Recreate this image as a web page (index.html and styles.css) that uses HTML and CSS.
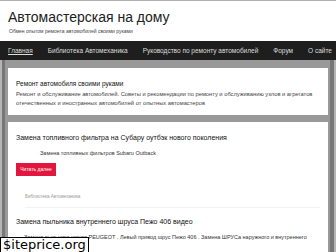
FILE: index.html
```html
<!DOCTYPE html>
<html lang="ru">
<head>
    <meta charset="UTF-8">
    <meta name="viewport" content="width=device-width, initial-scale=1.0">
    <title>Автомастерская на дому</title>
    <link rel="stylesheet" href="styles.css">
</head>
<body>
    <div class="header">
        <h1 class="site_title">Автомастерская на дому</h1>
        <p class="site_desc">Обмен опытом ремонта автомобилей своими руками</p>
    </div>
    <div class="nav">
        <a class="current" href="#">Главная</a>
        <a href="#">Библиотека Автомеханика</a>
        <a href="#">Руководство по ремонту автомобилей</a>
        <a href="#">Форум</a>
        <a href="#">О сайте</a>
    </div>
    <div class="page">
        <div class="card intro">
            <div class="intro_title">Ремонт автомобиля своими руками</div>
            <p class="intro_text">Ремонт и обслуживание автомобилей. Советы и рекомендации по ремонту и обслуживанию узлов и агрегатов отечественных и иностранных автомобилей от опытных автомастеров</p>
        </div>
        <div class="card posts">
            <div class="post">
                <h2 class="post_title">Замена топливного фильтра на Субару оутбэк нового поколения</h2>
                <p class="post_excerpt">Замена топливных фильтров Subaru Outback</p>
                <a class="more_btn" href="#">Читать далее</a>
                <div class="post_cat">Библиотека Автомеханика</div>
            </div>
            <div class="post">
                <h2 class="post_title">Замена пыльника внутреннего шруса Пежо 406 видео</h2>
                <p class="post_excerpt">Замена пыльника шруса PEUGEOT . Левый привод шрус Пежо 406 . Замена ШРУСа наружного и внутреннего</p>
            </div>
        </div>
    </div>
    <div class="badge">$iteprice.org</div>
</body>
</html>
```
FILE: styles.css
```css
body{
    margin: 0;
    font-family: 'Liberation Sans', Arial, sans-serif;
    background: #999;
    height: 252px;
    overflow: hidden;
}

.header{
    background: #fff;
    border-top: 1px solid #b0b0b0;
    height: 40px;
    padding-left: 8px;
}

.site_title{
    margin: 0;
    padding-top: 8px;
    font-size: 14px;
    font-weight: normal;
    color: #222;
    line-height: 16px;
}

.site_desc{
    margin: 3px 0 0 1px;
    font-size: 5px;
    color: #444;
}

.nav{
    background: #1e1e1e;
    height: 19px;
    display: flex;
    align-items: center;
    gap: 15px;
    padding-left: 8px;
}

.nav a{
    color: #ddd;
    font-size: 6.5px;
    text-decoration: none;
}

.nav a.current{
    text-decoration: underline;
}

.page{
    padding: 8px 8px 0 8px;
    display: flex;
    flex-direction: column;
    gap: 7px;
    box-shadow: inset 2px 0 #b5b5b5, inset 5px 0 #777, inset -2px 0 #b5b5b5, inset -6px 0 #777;
    height: 200px;
}

.card{
    background: #fff;
}

.intro{
    height: 47px;
    box-sizing: border-box;
    padding: 12px 8px 0 8px;
}

.intro_title{
    font-size: 6.5px;
    color: #111;
}

.intro_text{
    margin: 3px 0 0 0;
    font-size: 5.75px;
    line-height: 9px;
    color: #444;
}

.posts{
    flex: 1;
    padding: 12px 8px 0 8px;
}

.post_title{
    margin: 0;
    font-size: 7px;
    font-weight: normal;
    color: #111;
}

.post_excerpt{
    margin: 9px 0 0 24px;
    font-size: 5.5px;
    color: #333;
    white-space: nowrap;
}

.more_btn{
    display: inline-block;
    margin-top: 7px;
    background: #e3173e;
    color: #fff;
    font-size: 5px;
    text-decoration: none;
    width: 40px;
    height: 13px;
    line-height: 13px;
    text-align: center;
}

.post_cat{
    margin: 18px 0 0 9px;
    font-size: 4.5px;
    color: #999;
    padding-bottom: 8px;
    border-bottom: 1px solid #f2f2f2;
}

.post + .post{
    margin-top: 10px;
}

.post + .post .post_excerpt{
    margin: 9px 0 0 8px;
}

.badge{
    position: absolute;
    left: 0;
    top: 237px;
    background: #fff;
    border: 1px solid #000;
    font-family: 'DejaVu Sans', sans-serif;
    font-size: 13px;
    line-height: 14px;
    padding: 0 2px;
    color: #000;
}
```
